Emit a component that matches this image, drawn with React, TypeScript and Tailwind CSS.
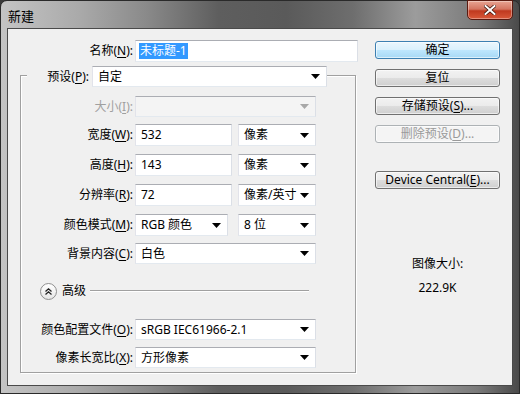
import React from "react";

const Arrow = ({ disabled }: { disabled?: boolean }) => (
  <svg width="9" height="5" viewBox="0 0 9 5" className="shrink-0">
    <polygon points="0,0 9,0 4.5,5" fill={disabled ? "#a8a8a8" : "#000"} />
  </svg>
);

const U = ({ c }: { c: string }) => <span className="underline underline-offset-2">{c}</span>;

function Label({ text, k, cls, disabled }: { text: string; k: string; cls: string; disabled?: boolean }) {
  return (
    <div className={`${cls} shrink-0 text-right whitespace-nowrap ${disabled ? "text-[#a0a0a0]" : "text-black"}`}>
      {text}(<U c={k} />):
    </div>
  );
}

function Select({ cls, text, disabled }: { cls: string; text?: string; disabled?: boolean }) {
  return (
    <div
      className={`${cls} flex items-center justify-between pl-[5px] pr-[6px] border border-t-[#abadb3] border-l-[#e2e3ea] border-r-[#dbdfe6] border-b-[#e3e9ef] ${
        disabled ? "bg-[#f4f4f4]" : "bg-white"
      }`}
    >
      <span className="whitespace-nowrap">{text}</span>
      <Arrow disabled={disabled} />
    </div>
  );
}

function Input({ cls, text }: { cls: string; text: string }) {
  return (
    <div className={`${cls} flex items-center pl-[5px] bg-white border border-t-[#abadb3] border-l-[#e2e3ea] border-r-[#dbdfe6] border-b-[#e3e9ef]`}>
      {text}
    </div>
  );
}

function Btn({ children, cls, kind }: { children: React.ReactNode; cls: string; kind?: "default" | "disabled" }) {
  const base =
    kind === "default"
      ? "border-[#3c7fb1] bg-[linear-gradient(180deg,#eaf6fd_0%,#d9f0fc_50%,#bee6fd_51%,#a7d9f5_100%)] text-black"
      : kind === "disabled"
      ? "border-[#adb2b5] bg-[#f4f4f4] text-[#9a9a9a]"
      : "border-[#707070] bg-[linear-gradient(180deg,#f2f2f2_0%,#ebebeb_50%,#dddddd_51%,#cfcfcf_100%)] text-black";
  return (
    <div className={`${cls} ${base} h-[18px] w-[125px] border rounded-[3px] flex items-center justify-center leading-none whitespace-nowrap shadow-[inset_0_0_0_1px_rgba(255,255,255,0.6)]`}>
      {children}
    </div>
  );
}

export default function App() {
  return (
    <div className="w-[520px] h-[394px] overflow-hidden bg-[#3a3a3a] font-['Noto_Sans','Noto_Sans_CJK_SC',sans-serif] text-[12px] leading-[16px]">
      <div className="w-[520px] h-[394px] rounded-t-[7px] border border-[#2a2a2a] flex flex-col bg-[linear-gradient(90deg,#c4c4c4_0%,#aaaaaa_15%,#8a8a8a_28%,#5e5e5e_42%,#5a5a5a_55%,#6e6e6e_68%,#9c9c9c_80%,#7a7a7a_92%,#4a4a4a_100%)]">
        {/* title bar */}
        <div className="h-[27px] flex items-start shrink-0">
          <div className="pl-[7px] pt-[7px] text-[13px] text-black">新建</div>
          <div className="ml-auto mr-[6px] -mt-[1px] w-[46px] h-[20px] rounded-b-[5px] border border-[#5a1a10] bg-[linear-gradient(180deg,#e8a493_0%,#d47561_45%,#c0391f_55%,#d9593a_100%)] flex items-center justify-center shadow-[inset_0_0_0_1px_rgba(255,255,255,0.35)]">
            <svg width="12" height="10" viewBox="0 0 12 10">
              <path d="M1.5 1 L10.5 9 M10.5 1 L1.5 9" stroke="#3a1208" strokeWidth="3.4" strokeLinecap="square" />
              <path d="M1.5 1 L10.5 9 M10.5 1 L1.5 9" stroke="#ffffff" strokeWidth="2" strokeLinecap="square" />
            </svg>
          </div>
        </div>
        {/* client */}
        <div className="mx-[6px] mb-[7px] flex-1 border border-[#4a4a4a] bg-[#f0f0f0] flex">
          {/* left column */}
          <div className="w-[367px] shrink-0 flex flex-col">
            <div className="mt-[11px] flex items-center h-[22px]">
              <Label text="名称" k="N" cls="w-[125px]" />
              <div className="ml-[2px] w-[223px] h-[22px] flex items-center pl-[3px] bg-white border border-t-[#abadb3] border-l-[#e2e3ea] border-r-[#dbdfe6] border-b-[#e3e9ef]">
                <span className="bg-[#3399ff] text-white px-[1px]">未标题-1</span>
              </div>
            </div>

            {/* group box */}
            <div className="mt-[13px] ml-[12px] w-[336px] h-[298px] border border-[#a0a0a0] shadow-[inset_1px_1px_0_#ffffff,1px_1px_0_#ffffff] flex flex-col">
              <div className="-mt-[10px] flex items-center h-[21px]">
                <div className="ml-[6px] w-[65px] h-[21px] bg-[#f0f0f0] flex items-center justify-end pr-[3px] whitespace-nowrap">
                  预设(<U c="P" />):
                </div>
                <Select cls="w-[235px] h-[21px]" text="自定" />
              </div>

              <div className="mt-[9px] flex items-center">
                <Label text="大小" k="I" cls="w-[112px]" disabled />
                <Select cls="ml-[2px] w-[181px] h-[21px]" disabled />
              </div>

              <div className="mt-[7px] flex items-center">
                <Label text="宽度" k="W" cls="w-[112px]" />
                <Input cls="ml-[2px] w-[97px] h-[22px]" text="532" />
                <Select cls="ml-[6px] w-[78px] h-[22px]" text="像素" />
              </div>

              <div className="mt-[8px] flex items-center">
                <Label text="高度" k="H" cls="w-[112px]" />
                <Input cls="ml-[2px] w-[97px] h-[22px]" text="143" />
                <Select cls="ml-[6px] w-[78px] h-[22px]" text="像素" />
              </div>

              <div className="mt-[8px] flex items-center">
                <Label text="分辨率" k="R" cls="w-[112px]" />
                <Input cls="ml-[2px] w-[97px] h-[22px]" text="72" />
                <Select cls="ml-[6px] w-[78px] h-[22px]" text="像素/英寸" />
              </div>

              <div className="mt-[8px] flex items-center">
                <Label text="颜色模式" k="M" cls="w-[112px]" />
                <Select cls="ml-[2px] w-[93px] h-[22px]" text="RGB 颜色" />
                <Select cls="ml-[10px] w-[78px] h-[22px]" text="8 位" />
              </div>

              <div className="mt-[7px] flex items-center">
                <Label text="背景内容" k="C" cls="w-[112px]" />
                <Select cls="ml-[2px] w-[181px] h-[21px]" text="白色" />
              </div>

              <div className="mt-[19px] flex items-center h-[16px]">
                <div className="ml-[19px] w-[17px] h-[17px] rounded-full border border-[#8f8f8f] bg-[linear-gradient(180deg,#ffffff_0%,#e6e6e6_100%)] flex items-center justify-center">
                  <svg width="9" height="9" viewBox="0 0 9 9">
                    <path d="M1.5 4.5 L4.5 1.8 L7.5 4.5 M1.5 7.5 L4.5 4.8 L7.5 7.5" fill="none" stroke="#222" strokeWidth="1.3" />
                  </svg>
                </div>
                <span className="ml-[5px]">高级</span>
                <div className="ml-[4px] w-[219px] h-[2px] border-t border-[#a0a0a0] border-b border-b-white" />
              </div>

              <div className="mt-[20px] flex items-center">
                <Label text="颜色配置文件" k="O" cls="w-[112px]" />
                <Select cls="ml-[2px] w-[181px] h-[21px]" text="sRGB IEC61966-2.1" />
              </div>

              <div className="mt-[7px] flex items-center">
                <Label text="像素长宽比" k="X" cls="w-[112px]" />
                <Select cls="ml-[2px] w-[181px] h-[21px]" text="方形像素" />
              </div>
            </div>
          </div>

          {/* right column */}
          <div className="w-[125px] shrink-0 flex flex-col pt-[12px]">
            <Btn cls="" kind="default">确定</Btn>
            <Btn cls="mt-[10px]">复位</Btn>
            <Btn cls="mt-[10px]">
              存储预设(<U c="S" />)...
            </Btn>
            <Btn cls="mt-[10px]" kind="disabled">
              删除预设(<U c="D" />)...
            </Btn>
            <Btn cls="mt-[28px]">
              Device Central(<U c="E" />)...
            </Btn>
            <div className="mt-[67px] text-center">图像大小:</div>
            <div className="mt-[8px] text-center">222.9K</div>
          </div>
        </div>
      </div>
    </div>
  );
}
